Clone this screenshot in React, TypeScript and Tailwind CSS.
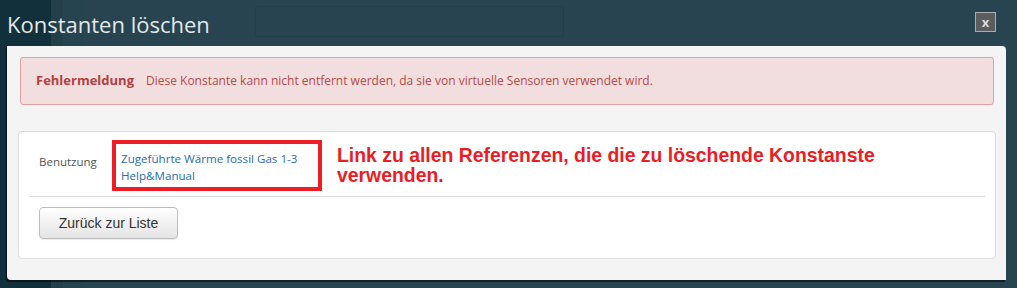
import React from 'react';

const sans = { fontFamily: '"Open Sans", "DejaVu Sans", sans-serif' };
const arial = { fontFamily: '"Liberation Sans", Arial, sans-serif' };

export default function App() {
  return (
    <div className="relative w-[1017px] h-[288px] overflow-hidden bg-[#274450]" style={sans}>
      {/* page behind the modal */}
      <div className="flex h-full">
        <div className="w-[51px] h-full bg-[#12303b]" />
        <div className="w-[12px] h-full bg-[#223f4a]" />
        <div className="w-[20px] h-full bg-[#264450]" />
        <div className="flex-1 h-full pt-[6px] pl-[172px]">
          <div className="w-[309px] h-[31px] border border-[#22404b] rounded-[2px]" />
        </div>
      </div>

      {/* modal */}
      <div className="absolute left-[7px] top-0 w-[999px]">
        <div className="h-[46px] flex items-center justify-between pr-[10px]">
          <h1 className="text-[22px] text-[#e3e8ea] leading-none mt-[1px]">Konstanten löschen</h1>
          <button className="w-[21px] h-[20px] mt-[-2px] border border-[#a9adaf] bg-[#5b5c5e] text-[#d9d9d9] text-[13px] font-bold leading-none flex items-center justify-center">
            x
          </button>
        </div>

        <div className="h-[234px] bg-[#f4f4f4] rounded-tr-[4px] rounded-bl-[4px] shadow-[-1px_2px_1px_rgba(0,0,0,0.55)] pt-[11px] pl-[11px] pr-[10px]">
          <div className="h-[48px] ml-[2px] mr-[2px] bg-[#f2dede] border border-[#e3a09e] rounded-[3px] flex items-center pl-[15px]">
            <span className="text-[13px] font-bold text-[#b4403e]">Fehlermeldung</span>
            <span className="ml-[12px] text-[12px] text-[#b94a48]">
              Diese Konstante kann nicht entfernt werden, da sie von virtuelle Sensoren verwendet wird.
            </span>
          </div>

          <div className="mt-[26px] h-[128px] bg-white border border-[#dddddd] rounded-[4px] px-[10px]">
            <div className="h-[65px] flex items-start border-b border-[#dddddd]">
              <span className="text-[11.5px] text-[#555555] mt-[21px] ml-[10px] w-[73px]">Benutzung</span>
              <div className="mt-[8px] w-[210px] h-[51px] border-[4px] border-[#ee1c25] pl-[5px] pt-[6px]">
                <a className="block text-[11.6px] leading-[17px] text-[#2b6cb0]">Zugeführte Wärme fossil Gas 1-3</a>
                <a className="block text-[11.6px] leading-[17px] text-[#2b6cb0]">Help&amp;Manual</a>
              </div>
              <p className="ml-[15px] mt-[13px] text-[19.4px] font-bold leading-[20px] text-[#ed1c24]" style={arial}>
                Link zu allen Referenzen, die die zu löschende Konstanste
                <br />
                verwenden.
              </p>
            </div>
            <button
              className="mt-[10px] ml-[10px] w-[139px] h-[32px] rounded-[4px] border border-[#bdbdbd] bg-gradient-to-b from-white to-[#e4e4e4] text-[14px] text-[#333333] shadow-[0_1px_1px_rgba(0,0,0,0.08)]"
              style={arial}
            >
              Zurück zur Liste
            </button>
          </div>
        </div>
      </div>
    </div>
  );
}
